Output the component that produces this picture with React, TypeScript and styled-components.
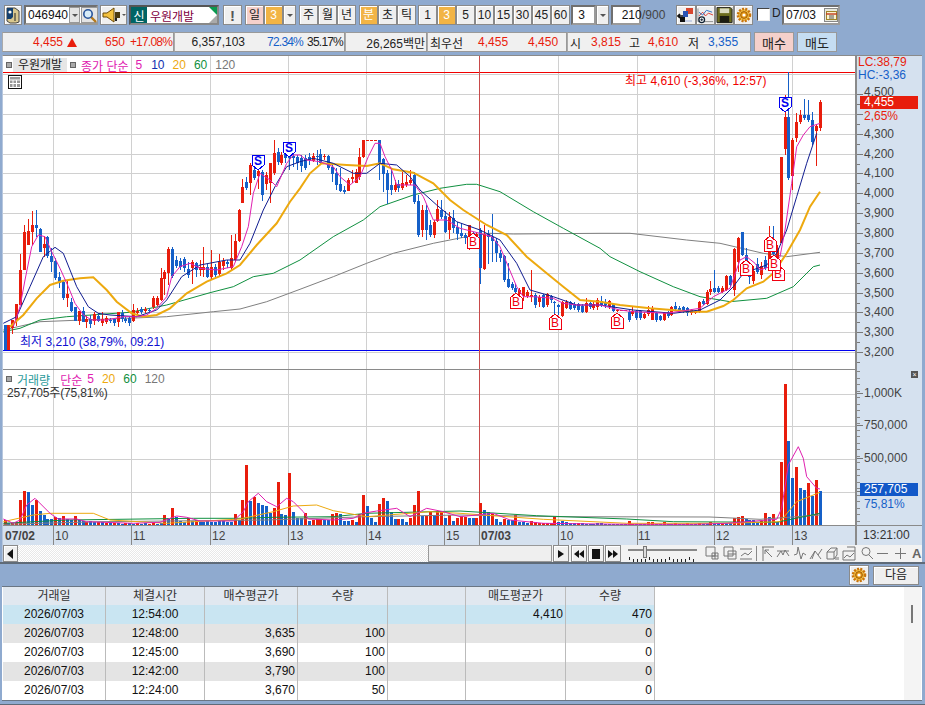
import React from "react";
import styled, { createGlobalStyle } from "styled-components";

const RED = "#E81D0C";
const BLUE = "#1560C8";
const FONT = `"Liberation Sans","Noto Sans CJK KR",sans-serif`;

const GlobalStyle = createGlobalStyle`
  html, body { margin: 0; padding: 0; background: #8FAACF; overflow: hidden; }
  #root { width: 925px; height: 705px; }
  * { box-sizing: border-box; }
`;

const Page = styled.div`
  width: 925px; height: 705px; display: flex; flex-direction: column;
  background: #8FAACF; font: 12px ${FONT}; color: #222; overflow: hidden;
`;
const Toolbar = styled.div`
  height: 32px; padding: 5px 0 0 4px; display: flex; align-items: flex-start; flex: none;
`;
const Btn = styled.div<{ $w: number; $ml?: number; $bg?: string; $c?: string; $fs?: number }>`
  width: ${(p) => p.$w}px; height: 20px; margin-left: ${(p) => p.$ml ?? 0}px; flex: none;
  display: flex; align-items: center; justify-content: center;
  background: ${(p) => p.$bg ?? "#EFEFEF"}; color: ${(p) => p.$c ?? "#222"};
  border: 1px solid #8a8a8a; box-shadow: inset 1px 1px 0 #fff;
  font-size: ${(p) => p.$fs ?? 12}px; line-height: 1;
`;
const Field = styled.div<{ $w: number; $ml?: number }>`
  width: ${(p) => p.$w}px; height: 20px; margin-left: ${(p) => p.$ml ?? 0}px; flex: none;
  display: flex; align-items: center; background: #fff; border: 2px solid #6f6f6f;
  border-right-color: #9a9a9a; border-bottom-color: #9a9a9a; font-size: 12px; color: #111; padding-left: 2px;
`;
const CodeBtn = styled.div<{ $w: number }>`
  width: ${(p) => p.$w}px; height: 16px; margin-left: 1px; flex: none; background: #E4E4E4;
  border: 1px solid #999; display: flex; align-items: center; justify-content: center;
`;
const Caret = styled.i`
  width: 0; height: 0; border-left: 3px solid transparent; border-right: 3px solid transparent;
  border-top: 3px solid #555;
`;
const NameBox = styled.div`
  position: relative; width: 90px; height: 20px; margin-left: 2px; flex: none; background: #fff;
  border: 2px solid #555; border-right-color: #888; border-bottom-color: #888;
  display: flex; align-items: center; color: #7F0040; font-size: 12px;
`;
const Shin = styled.span`
  width: 16px; height: 16px; background: #006464; color: #fff; font-size: 12px;
  display: flex; align-items: center; justify-content: center; margin-right: 3px;
`;
const CornerTop = styled.i`
  position: absolute; right: 0; top: 0; width: 0; height: 0;
  border-top: 8px solid #0A9A50; border-left: 8px solid transparent;
`;
const CornerBot = styled.i`
  position: absolute; right: 0; bottom: 0; width: 0; height: 0;
  border-bottom: 8px solid #aaa; border-left: 8px solid transparent;
`;
const Slash = styled.span`
  margin-left: 1px; width: 34px; flex: none; font-size: 12px; line-height: 20px; color: #444;
`;
const Check = styled.div`
  width: 13px; height: 13px; margin: 3px 0 0 4px; background: #fff;
  border: 1px solid #eee; border-top-color: #444; border-left-color: #444; flex: none;
`;
const DLabel = styled.span`
  margin-left: 2px; width: 9px; font-size: 12px; line-height: 17px; color: #222; flex: none;
`;
const DateIcon = styled.div`
  width: 17px; height: 14px; margin-left: 8px; background: #E8E8DC; border: 1px solid #888;
  display: flex; align-items: center; justify-content: center;
`;

const StatsRow = styled.div`
  height: 20px; margin-top: 0; padding-left: 2px; display: flex; flex: none;
`;
const StatCell = styled.div<{ $w: number }>`
  width: ${(p) => p.$w}px; height: 20px; background: #F0F0F0; border: 1px solid #999;
  border-left-color: #aaa; display: flex; align-items: center; font-size: 12px;
`;
const Val = styled.span<{ $w?: number; $c?: string; $ml?: number; $tight?: boolean }>`
  width: ${(p) => (p.$w ? `${p.$w}px` : "auto")}; margin-left: ${(p) => p.$ml ?? 0}px;
  text-align: right; color: ${(p) => p.$c ?? "#222"}; flex: none;
  white-space: nowrap; letter-spacing: ${(p) => (p.$tight ? "-0.8px" : "0")};
`;
const Tri = styled.i`
  margin-left: 4px; width: 0; height: 0; border-left: 5px solid transparent; border-right: 5px solid transparent;
  border-bottom: 9px solid ${RED};
`;
const Trade = styled.div<{ $bg: string; $ml: number }>`
  width: 40px; height: 20px; margin-left: ${(p) => p.$ml}px; background: ${(p) => p.$bg};
  border: 1px solid #999; display: flex; align-items: center; justify-content: center; font-size: 13px; color: #222;
`;

const Chart = styled.div`
  margin: 3px 3px 0 2px; width: 920px; flex: none; display: flex; flex-direction: column;
  background: #D5E1EF; border-top: 1px solid #8a8a8a; border-left: 1px solid #B7C7DE;
`;
const PaneRow = styled.div<{ $h: number }>`
  height: ${(p) => p.$h}px; display: flex; position: relative; flex: none;
`;
const Plot = styled.div<{ $ruled?: boolean }>`
  position: relative; width: 852px; height: 100%; background: #fff; flex: none;
  border-top: ${(p) => (p.$ruled ? "1px solid #8a8a8a" : "0")};
  svg { display: block; }
`;
const AxisCol = styled.div`
  position: relative; width: 67px; height: 100%; border-left: 2px solid #8a8a8a; flex: none;
  svg { display: block; }
`;
const Legend = styled.div`
  position: absolute; left: 3px; top: 2px; display: flex; align-items: center; height: 14px; font-size: 12px;
`;
const Sq = styled.i<{ $ml?: number }>`
  width: 6px; height: 6px; margin-left: ${(p) => p.$ml ?? 0}px; background: #aaa; border: 1px solid #666; flex: none;
`;
const NameTag = styled.span`
  margin-left: 1px; width: 54px; height: 14px; text-align: center; line-height: 14px; background: #E6E6E6; color: #222;
`;
const Lg = styled.span<{ $c: string; $ml: number }>`
  margin-left: ${(p) => p.$ml}px; color: ${(p) => p.$c}; white-space: nowrap;
`;
const GridIcon = styled.div`
  position: absolute; left: 5px; top: 19px; width: 14px; height: 14px; border: 1px solid #111; background: #fff;
  display: flex; align-items: center; justify-content: center;
`;
const SubLegend = styled.div`
  position: absolute; left: 4px; top: 13px; font-size: 12px; letter-spacing: -0.15px; color: #333; white-space: nowrap;
`;
const PriceTag = styled.div<{ $bg: string; $top: number }>`
  position: absolute; left: 3px; top: ${(p) => p.$top}px; width: 58px; height: 13px; padding-left: 4px;
  background: ${(p) => p.$bg}; color: #fff; font-size: 12px; line-height: 13px;
`;
const CloseMark = styled.div`
  position: absolute; right: 4px; top: 2px; width: 7px; height: 7px; background: #555; color: #fff;
  font-size: 7px; line-height: 7px; text-align: center;
`;
const XRow = styled.div`
  height: 20px; display: flex; flex: none; border-top: 1px solid #8a8a8a; background: #D5E1EF;
  svg { display: block; }
`;
const XTime = styled.div`
  width: 67px; height: 100%; border-left: 2px solid #8a8a8a; padding-left: 6px; line-height: 18px; font-size: 12px; color: #333;
`;
const ScrollRow = styled.div`
  height: 17px; display: flex; align-items: center; background: #F2F2F2; flex: none;
`;
const ScrollBtn = styled.div<{ $w: number; $ml?: number }>`
  width: ${(p) => p.$w}px; height: 17px; margin-left: ${(p) => p.$ml ?? 0}px; flex: none; background: #F0F0F0;
  border: 1px solid #8a8a8a; box-shadow: inset 1px 1px 0 #fff; display: flex; align-items: center; justify-content: center;
`;
const Track = styled.div`
  width: 410px; height: 17px; flex: none;
  background: repeating-conic-gradient(#fff 0 25%, #E8E8E8 0 50%) 0 0 / 2px 2px;
`;
const Thumb = styled.div`
  width: 124px; height: 17px; flex: none; background: #EFEFEF; border: 1px solid #999;
`;
const Tools = styled.div`
  display: flex; align-items: center; margin-left: 6px; height: 17px; color: #666;
  svg { display: block; flex: none; }
`;
const Sep = styled.i`
  width: 1px; height: 15px; margin: 0 4px 0 3px; background: #888; flex: none;
`;
const ToolSlot = styled.span<{ $ml: number }>`
  margin-left: ${(p) => p.$ml}px; display: flex; flex: none; font-size: 13px; font-weight: 700; color: #666;
`;
const BottomBar = styled.div`
  height: 24px; flex: none; display: flex; align-items: center; justify-content: flex-end;
  padding-right: 6px; margin-top: 0; border-top: 2px solid #5f6b78; background: #8FAACF;
`;
const NextBtn = styled(Btn)`
  margin-left: 4px; width: 46px; height: 19px;
`;
const Table = styled.div`
  margin-left: 2px; width: 920px; height: 115px; flex: none; position: relative; background: #fff;
  border-top: 1px solid #6a7684; border-bottom: 1px solid #6a7684; display: flex; flex-direction: column;
`;
const TRow = styled.div<{ $bg?: string; $h?: number; $c?: string }>`
  display: grid; height: ${(p) => p.$h ?? 19}px; flex: none; width: 652px; margin-left: 1px;
  grid-template-columns: 103px 99px 93px 90px 78px 100px 89px;
  background: ${(p) => p.$bg ?? "#fff"}; color: ${(p) => p.$c ?? "#111"};
`;
const TCell = styled.div<{ $r?: boolean }>`
  border-right: 1px solid #BBBBBB; line-height: 19px; font-size: 12px; white-space: nowrap;
  padding: 0 2px; text-align: ${(p) => (p.$r ? "right" : "center")};
`;
const VScroll = styled.div`
  position: absolute; right: 1px; top: 0; bottom: 0; width: 17px; background: #F4F4F4;
`;
const VThumb = styled.i`
  position: absolute; left: 7px; top: 18px; width: 2px; height: 18px; background: #777;
`;
const Tail = styled.div`
  flex: 1; border-bottom: 1px solid #5f6b78; margin-top: 0;
`;

/* ---------- chart data ---------- */
type C = [string, number, number, number, number];
const R = (t: number, b: number, h = t, l = b): C => ["r", t, b, h, l];
const B = (t: number, b: number, h = t, l = b): C => ["b", t, b, h, l];
const candles: C[] = [
  B(325,350),R(325,350),R(320,328,320,334),R(304,320,304,326),R(270,305,254,305),R(232,270,225,270),R(231,245,219,245),R(225,232,211,245),B(225,228,210,237),B(229,252,228,252),
  R(244,248,236,257),B(237,256,236,258),B(256,262,248,272),B(261,278,258,280),B(277,283,272,288),B(282,298,280,300),R(294,298,280,307),B(302,311,298,312),B(307,321),R(311,321,311,325),
  B(311,322,307,322),R(319,322,316,328),B(319,324,315,328),R(314,321,312,325),B(316,321,313,322),R(319,323,312,326),R(318,322,316,324),B(320,321,318,323),B(319,323,318,326),R(312,322,312,327),
  B(313,319,310,322),B(319,321,317,323),B(318,323,316,326),R(310,321,304,322),R(311,313,308,316),B(309,312,307,314),R(309,311,307,313),B(310,311,308,312),R(298,307,296,309),R(298,305,296,306),
  R(278,300,268,301),R(272,279,270,295),R(249,273,247,285),B(249,276,247,278),B(260,266,256,268),B(261,267,258,270),B(259,268,257,272),B(269,275,262,278),R(262,268,260,284),B(263,270,262,277),
  R(267,270,260,276),R(267,270,247,277),B(267,277,264,278),R(267,277,250,280),B(267,275,264,277),R(262,274,254,276),R(261,266,258,270),B(262,264,260,268),R(258,268,235,270),R(241,260,234,261),
  R(210,241,209,242),R(187,203,179,203),B(182,188,177,190),R(165,183,163,195),B(170,178,165,180),R(171,176,165,189),B(172,195,170,201),R(175,184,172,190),R(163,183,163,203),R(153,173,140,175),
  B(152,162,148,165),R(155,163,152,165),B(148,158,146,163),B(156,158,150,170),B(156,158,150,167),B(157,163,155,170),B(158,166,155,172),B(158,168,155,170),B(157,160,153,165),R(156,161,153,162),
  B(156,157,150,165),B(154,163,149,164),R(156,157,154,160),B(156,168,155,170),B(167,174,165,182),B(173,185,168,190),B(184,191,168,192),B(190,192,186,194),R(180,191,178,191),R(177,179,170,183),
  R(172,183,169,183),R(157,177,148,180),R(140,157,140,158),R(140,141),R(140,141),R(140,141),B(140,163,140,180),B(159,174,158,192),B(173,190,170,204),B(185,190,170,195),
  R(185,190,180,192),B(184,188,180,192),R(183,188,172,190),R(182,185,175,187),R(180,183,170,185),B(175,202,172,204),B(201,235,195,237),R(210,230,205,237),B(210,230,205,240),B(225,235,220,237),
  R(222,235,220,238),R(209,221,200,222),B(210,217,200,219),B(216,232,211,233),R(217,230,212,239),B(218,228,210,233),B(227,234,222,240),B(233,236,223,238),B(235,238,233,244),R(225,238,225,250),
  B(233,235,232,237),R(234,236,232,240),B(230,268,228,284),R(234,269,225,270),B(234,237,230,264),B(237,241,214,262),B(241,253,238,262),B(253,258,250,262),B(256,280,255,282),B(279,287,263,288),
  B(284,288,282,290),B(288,292,284,293),R(290,294,288,296),R(287,296,287,301),R(292,296,290,298),R(295,297,270,302),B(295,305,293,308),R(297,302,295,307),B(295,307,294,308),R(294,305,293,307),
  B(296,300,295,303),B(302,303,301,315),B(305,307,304,315),R(302,316,301,317),R(302,308,300,309),B(302,309,301,310),B(304,308,302,310),B(304,310,303,312),B(306,312,304,313),R(303,312,298,313),
  B(303,307,302,309),R(304,308,302,310),R(300,307,298,310),B(301,305,296,307),B(302,305,299,308),R(301,306,300,309),B(304,311,303,312),R(310,311,309,312),R(310,311),R(310,311),
  B(312,320,310,322),R(311,314,306,316),B(311,318,310,320),B(311,318,310,320),R(314,318,312,319),R(310,314,306,316),R(308,320,306,320),B(313,320,312,322),B(316,320,315,321),R(313,320,312,321),
  B(312,316,311,318),R(307,315,306,316),B(306,309,302,311),B(308,312,306,313),B(307,311,306,313),B(308,313,307,316),R(310,313,309,315),R(311,313,310,314),R(302,312,301,313),B(301,304,299,305),
  R(292,304,290,305),R(289,292,281,295),B(288,292,270,293),B(288,292,286,293),R(288,292,286,293),R(276,290,275,291),B(276,285,275,287),R(249,290,248,296),R(238,262,237,272),B(232,255,232,256),
  B(255,261,248,263),B(273,277,270,284),R(271,281,266,284),B(264,272,258,274),R(266,275,262,279),B(260,268,256,270),R(250,268,226,269),B(245,254,226,256),R(248,258,245,262),R(157,243),
  R(117,149,95,155),B(117,178,72,180),R(140,176,138,190),R(122,138,113,142),R(115,122,110,124),B(115,118,99,120),B(115,120,100,122),B(120,142,112,145),R(126,131,125,166),R(102,128,100,131),
];
const vols = [
  5,-2,2,3,25,34,-33,-20,25,-14,-10,-6,-6,8,-7,9,-6,-5,9,-5,-4,3,-4,-3,3,-3,2,-2,2,-2,-1,2,-2,-1,2,-1,-2,1,2,-1,-2,
  10,-7,17,-8,-4,-3,7,-4,5,-3,-3,-4,-3,-3,-4,-5,-3,-3,11,-5,25,60,-24,28,-22,-20,-19,-12,17,43,-11,-10,52,-13,-7,-7,
  12,-4,5,6,6,-5,-5,11,12,-11,-4,-4,5,-3,11,30,-19,-7,-3,21,27,-24,-13,-6,6,-6,-3,7,20,34,-9,9,13,-10,14,14,-7,10,-4,7,
  9,8,-7,-7,7,
  22,-15,-13,11,-6,-3,6,-5,-5,10,-3,-3,-2,4,3,2,2,2,2,8,-3,-4,-3,-2,-2,2,-2,-1,-1,-1,-2,-2,-1,-1,-1,-1,-1,-1,
  4,1,-1,-1,-1,3,3,-1,-1,3,-1,-1,2,-1,-1,2,-1,-1,2,-1,-1,3,-1,-1,2,-2,-2,7,8,9,-6,-5,-5,-3,4,12,-8,11,-3,63,141,-84,-47,58,-37,-35,42,-29,45,-34,
];
const xAt = (i: number) => Math.round(4.5 + 3.9 * i);

const pts = (ox: number, oy: number, a: number[]) => {
  const o: string[] = [];
  for (let i = 0; i < a.length; i += 2) o.push(`${(ox + a[i] / 3).toFixed(1)},${(oy + a[i + 1] / 3).toFixed(1)}`);
  return o.join(" ");
};
const join = (...s: string[]) => s.join(" ");

const ma5 = join(
  pts(0,130,[40,590,60,530,75,450,95,350,115,315,135,320,155,365,180,415,205,470,225,520,250,555,275,570,320,570,370,560,410,560,440,555,470,535,500,500,515,440,540,410,570,400,600,415,650,420,700,410,725,350,745,290,760,190,780,130,810,150,830,170,860,100,880,75,900,75]),
  pts(300,130,[20,90,60,95,100,110,120,140,150,165,180,140,205,80,225,40,240,40,255,80,275,120,290,165,320,165,345,165,370,200,400,270,440,270,480,295,540,310,575,320,600,350,625,410,650,470,670,500,700,500,760,505,790,520,830,525,900,525]),
  pts(600,70,[60,720,100,725,200,730,300,715,340,680,390,655,420,570,440,560,465,580,480,600,510,590,540,560,555,480,575,340,590,230,610,195,630,170,660,160]),
);
const ma10 = join(
  pts(0,130,[10,580,50,560,90,470,130,380,165,352,190,370,230,470,265,530,295,550,330,555,410,560,470,540,500,510,545,440,600,405,680,390,720,390,750,340,790,240,830,160,860,110,900,95]),
  pts(300,130,[40,85,100,100,160,130,200,130,240,100,290,105,330,140,360,180,410,225,470,275,540,300,600,330,650,400,690,480,760,500,830,525,900,525]),
  pts(600,70,[100,720,220,730,300,720,360,690,400,650,430,610,500,585,530,550,560,480,590,380,620,280,650,190]),
);
const ma20 = join(
  pts(0,130,[30,590,70,555,110,505,150,465,190,452,240,445,280,442,320,480,350,515,395,550,430,560,470,555,510,535,560,490,620,455,680,430,720,405,770,345,830,280,870,215,900,175]),
  pts(300,130,[30,130,65,100,140,105,200,108,240,100,280,118,340,128,400,160,450,210,490,240,560,285,620,315,680,380,740,430,790,470,840,510,900,515]),
  pts(600,70,[60,705,150,715,280,725,320,725,370,708,400,690,440,655,490,635,520,610,560,550,600,480,630,410,660,365]),
);
const ma60 = join(
  pts(0,130,[10,605,60,595,120,570,200,560,390,547,500,525,630,488,700,470,760,440,820,430,900,390]),
  pts(300,130,[100,320,190,270,240,230,340,195,420,175,500,163,530,163,600,185,700,245,790,295,900,355]),
  pts(600,70,[30,560,120,605,220,650,300,680,390,695,500,685,580,650,640,590,660,585]),
);
const ma120 = join(
  pts(0,130,[10,600,120,575,250,570,500,560,640,545,720,537,800,515,900,478]),
  pts(300,130,[100,440,200,400,280,370,400,340,500,320,570,310,640,312,900,310]),
  pts(600,70,[90,490,260,510,360,520,490,550,560,560,660,547]),
);
const v5 = join(
  pts(0,365,[10,462,40,475,60,465,80,420,105,400,125,420,150,445,175,462,230,462,260,470,400,475,480,472,510,460,530,453,560,457,600,468,700,468,730,440,745,410,775,385,800,410,830,425,860,400,880,410,910,440,925,462,1000,465,1060,460,1090,445,1130,438,1190,430,1230,455,1280,430,1330,440,1380,455]),
  pts(460,365,[50,450,100,445,150,465,250,475,500,478,700,478,800,475,950,463,965,430,985,300,1015,245,1030,280,1040,335,1070,370,1080,372]),
);
const v20 = join(
  pts(0,365,[10,470,100,450,150,445,280,445,330,465,500,475,720,462,820,440,880,423,950,420,1000,437,1100,455,1290,440,1380,445]),
  pts(460,365,[250,463,500,475,800,475,960,470,1010,410,1080,382]),
);
const v60 = join(
  pts(0,365,[10,475,200,465,580,460,720,460,820,457,1000,455,1100,445,1380,438]),
  pts(460,365,[230,452,500,462,640,470,950,472,1080,445]),
);
const v120 = join(
  pts(0,365,[10,478,300,470,800,465,1100,455,1380,450]),
  pts(460,365,[300,455,750,456,900,463,1080,450]),
);

const vGrid = [53, 131, 210, 288, 366, 444, 558, 637, 714, 792];
const priceLevels = Array.from({ length: 14 }, (_, k) => ({ p: 3200 + k * 100, y: Math.round(94 + (13 - k) * 19.85) }));
const volLevels = [394, 426, 459, 492];

const Mark = ({ kind, x, y }: { kind: "S" | "B"; x: number; y: number }) => {
  const c = kind === "S" ? "#0000F0" : "#F00010";
  const d = kind === "S" ? `M${x} ${y}h12v10l-6 5l-6 -5z` : `M${x} ${y + 15}h12v-10l-6 -5l-6 5z`;
  return (
    <g>
      <path d={d} fill="#fff" stroke={c} />
      <text x={x + 6} y={y + (kind === "S" ? 10 : 13)} textAnchor="middle" fontSize="12" fontWeight={kind === "S" ? 700 : 400} fontFamily={FONT} fill={c}>{kind}</text>
    </g>
  );
};

const PricePlot = () => (
  <svg width={852} height={313} viewBox="3 56 852 313" shapeRendering="crispEdges">
    {priceLevels.map((l) => <rect key={l.p} x={3} y={l.y} width={852} height={1} fill="#D0D0D0" />)}
    <rect x={3} y={74} width={852} height={1} fill="#D0D0D0" />
    {vGrid.map((x) => <rect key={x} x={x} y={56} width={1} height={313} fill="#D0D0D0" />)}
    <rect x={3} y={72} width={852} height={1} fill="#F00000" />
    <rect x={3} y={350} width={852} height={1} fill="#0000F0" />
    <rect x={479} y={56} width={1} height={313} fill="#C84A4A" />
    <g fill="none" shapeRendering="auto">
      <polyline points={ma120} stroke="#808080" strokeWidth="1" />
      <polyline points={ma60} stroke="#109040" strokeWidth="1" />
    </g>
    {candles.map(([k, t, b, h, l], i) => {
      const x = xAt(i);
      const c = k === "r" ? RED : BLUE;
      return (
        <g key={i} fill={c}>
          <rect x={x} y={h} width={1} height={Math.max(1, l - h)} />
          <rect x={x - 1} y={t} width={3} height={Math.max(1, b - t)} />
        </g>
      );
    })}
    <g fill="none" shapeRendering="auto">
      <polyline points={ma20} stroke="#EDA90F" strokeWidth="2" />
      <polyline points={ma10} stroke="#101C90" strokeWidth="1" />
      <polyline points={ma5} stroke="#E020B0" strokeWidth="1" />
    </g>
    <Mark kind="S" x={252} y={155} />
    <Mark kind="S" x={283} y={142} />
    <Mark kind="S" x={779} y={97} />
    <Mark kind="B" x={467} y={233} />
    <Mark kind="B" x={510} y={293} />
    <Mark kind="B" x={549} y={314} />
    <Mark kind="B" x={611} y={313} />
    <Mark kind="B" x={740} y={260} />
    <Mark kind="B" x={764} y={236} />
    <Mark kind="B" x={772} y={265} />
    <Mark kind="B" x={768} y={255} />
    <text x={625} y={85} fontSize="12" fontFamily={FONT} fill="#F00000">최고 4,610 (-3,36%, 12:57)</text>
    <text x={20} y={346} fontSize="12" fontFamily={FONT} fill="#1010D0">최저 3,210 (38,79%, 09:21)</text>
  </svg>
);

const VolPlot = () => (
  <svg width={852} height={155} viewBox="3 370 852 155" shapeRendering="crispEdges">
    {volLevels.map((y) => <rect key={y} x={3} y={y} width={852} height={1} fill="#D0D0D0" />)}
    {vGrid.map((x) => <rect key={x} x={x} y={370} width={1} height={155} fill="#D0D0D0" />)}
    <rect x={479} y={370} width={1} height={155} fill="#C84A4A" />
    {vols.map((v, i) => (
      <rect key={i} x={xAt(i) - 1} y={525 - Math.abs(v)} width={3} height={Math.abs(v)} fill={v > 0 ? RED : BLUE} />
    ))}
    <g fill="none" strokeWidth="1" shapeRendering="auto">
      <polyline points={v120} stroke="#808080" />
      <polyline points={v60} stroke="#109040" />
      <polyline points={v20} stroke="#EDA90F" />
      <polyline points={v5} stroke="#E020B0" />
    </g>
  </svg>
);

const PriceAxis = () => (
  <svg width={65} height={313} viewBox="857 56 65 313" shapeRendering="crispEdges" fontFamily={FONT}>
    <text x={858} y={66} fontSize="12" fill={RED}>LC:38,79</text>
    <text x={858} y={79} fontSize="12" fill={BLUE}>HC:-3,36</text>
    {priceLevels.map((l) => (
      <g key={l.p}>
        <rect x={857} y={l.y} width={6} height={1} fill="#777" />
        <rect x={857} y={l.y + 10} width={3} height={1} fill="#777" />
        {l.p !== 4400 && <text x={864} y={l.y + (l.p === 4500 ? 2 : 4)} fontSize="12" fill="#444">{l.p.toLocaleString("en-US")}</text>}
      </g>
    ))}
    <text x={864} y={120} fontSize="12" fill={RED}>2,65%</text>
  </svg>
);

const VolAxis = () => (
  <svg width={65} height={155} viewBox="857 370 65 155" shapeRendering="crispEdges" fontFamily={FONT}>
    {Array.from({ length: 25 }, (_, k) => 372 + k * 6.5).map((y) => (
      <rect key={y} x={857} y={Math.round(y)} width={3} height={1} fill="#888" />
    ))}
    {volLevels.map((y) => <rect key={y} x={857} y={y} width={6} height={1} fill="#777" />)}
    <text x={864} y={398} fontSize="12" fill="#444">1,000K</text>
    <text x={864} y={430} fontSize="12" fill="#444">750,000</text>
    <text x={864} y={463} fontSize="12" fill="#444">500,000</text>
    <text x={864} y={509} fontSize="12" fill={BLUE}>75,81%</text>
  </svg>
);

const xLabels: [number, string, boolean][] = [
  [5, "07/02", true], [55, "10", false], [133, "11", false], [212, "12", false], [290, "13", false],
  [368, "14", false], [446, "15", false], [481, "07/03", true], [560, "10", false], [638, "11", false], [716, "12", false], [794, "13", false],
];
const XAxis = () => (
  <svg width={852} height={19} viewBox="3 527 852 19" shapeRendering="crispEdges" fontFamily={FONT}>
    {[53, 131, 210, 288, 366, 444, 479, 558, 637, 714, 792].map((x) => <rect key={x} x={x} y={527} width={1} height={19} fill="#888" />)}
    {xLabels.map(([x, t, bold]) => (
      <text key={x} x={x} y={541} fontSize="12" fontWeight={bold ? 700 : 400} fill="#444">{t}</text>
    ))}
  </svg>
);

/* ---------- small icons ---------- */
const Gear = ({ s = 16 }: { s?: number }) => (
  <svg width={s} height={s} viewBox="0 0 16 16">
    <circle cx="8" cy="8" r="6" fill="#F3C246" stroke="#C9740C" strokeWidth="2.6" strokeDasharray="2 1.2" />
    <circle cx="8" cy="8" r="3.4" fill="#E99A12" stroke="#8A4A08" strokeWidth="0.8" />
    <circle cx="8" cy="8" r="1.6" fill="#fff" />
  </svg>
);
const Logo = () => (
  <svg width="16" height="17" viewBox="0 0 16 17">
    <path d="M2 1h8l4 3v11l-3 1H5l-3-2z" fill="#D9C88F" stroke="#444" />
    <path d="M2 1h6v9l-2 2H2z" fill="#14406E" />
    <circle cx="5" cy="5" r="1.6" fill="#fff" />
    <path d="M10 6v8" stroke="#222" />
  </svg>
);
const Lens = () => (
  <svg width="15" height="15" viewBox="0 0 15 15">
    <path d="M9 9l5 5" stroke="#B5791B" strokeWidth="2.4" />
    <circle cx="6" cy="6" r="4.2" fill="#D8ECF8" stroke="#27539A" strokeWidth="1.6" />
  </svg>
);
const Horn = () => (
  <svg width="24" height="16" viewBox="0 0 24 16">
    <path d="M1 6h4l7-5v14l-7-5H1z" fill="#F3C13E" stroke="#6B4A08" />
    <rect x="13" y="5" width="5" height="6" fill="#4B3A10" />
    <path d="M14 11v3" stroke="#222" strokeWidth="2" />
    <path d="M20 7l2 2 2-2z" fill="#555" />
  </svg>
);
const CandleIcon = () => (
  <svg width="18" height="17" viewBox="0 0 18 17">
    <rect x="9" y="1" width="7" height="6" fill="#D8462E" />
    <rect x="6" y="4" width="5" height="6" fill="#2B55B5" />
    <path d="M1 9l5 0M3 7l-2 2 2 2" stroke="#111" strokeWidth="1.6" fill="none" />
    <rect x="3" y="10" width="5" height="5" fill="#111" />
    <path d="M8 14h7" stroke="#B8C4E0" strokeWidth="1.5" />
  </svg>
);
const TrendIcon = () => (
  <svg width="18" height="17" viewBox="0 0 18 17">
    <path d="M1 1v14h16" stroke="#888" fill="none" />
    <path d="M2 9l4-4 3 4 3-3 5 2" stroke="#D8362E" fill="none" />
    <path d="M2 5l4 3 4-5 6 2" stroke="#2A6EC0" fill="none" />
    <circle cx="5" cy="13" r="3" fill="#fff" stroke="#123" strokeWidth="1.4" />
    <path d="M5 11.5v3M3.5 13h3" stroke="#123" />
  </svg>
);
const Floppy = () => (
  <svg width="18" height="18" viewBox="0 0 18 18">
    <path d="M1 1h14l2 2v14H1z" fill="#6C6C1E" stroke="#222" />
    <rect x="4" y="2" width="10" height="5" fill="#DADAC0" />
    <rect x="4" y="10" width="10" height="7" fill="#1C1C10" />
  </svg>
);
const CalIcon = () => (
  <svg width="11" height="9" viewBox="0 0 11 9">
    <rect x="0.5" y="0.5" width="10" height="8" fill="#FBF3D0" stroke="#A08428" />
    <path d="M0 3h11" stroke="#C03A1C" strokeWidth="1.4" />
    <path d="M3 5h5M3 7h5" stroke="#555" />
  </svg>
);
const GridGlyph = () => (
  <svg width="10" height="10" viewBox="0 0 10 10">
    <rect width="10" height="10" fill="#999" />
    <path d="M0 3h10M3 3v7M6.5 3v7M0 6.5h10" stroke="#fff" />
  </svg>
);
const T = ({ d, w = 14 }: { d: string; w?: number }) => (
  <svg width={w} height="15" viewBox={`0 0 ${w} 15`}><path d={d} fill="none" stroke="#777" strokeWidth="1" /></svg>
);
const Play = ({ d }: { d: string }) => (
  <svg width="12" height="10" viewBox="0 0 12 10"><path d={d} fill="#111" /></svg>
);
const Slider = () => (
  <svg width="72" height="17" viewBox="0 0 72 17" shapeRendering="crispEdges">
    <rect x="1" y="4" width="69" height="2" fill="#888" />
    {Array.from({ length: 17 }, (_, k) => <rect key={k} x={2 + k * 4} y={k % 5 === 0 ? 12 : 14} width="1" height="3" fill="#222" />)}
    <path d="M16 1h3v11h-3z" fill="#ddd" stroke="#777" />
  </svg>
);

const rows = [
  { d: "2026/07/03", t: "12:54:00", bp: "", bq: "", sp: "4,410", sq: "470", bg: "#C9E5F2" },
  { d: "2026/07/03", t: "12:48:00", bp: "3,635", bq: "100", sp: "", sq: "0", bg: "#E4E4E4" },
  { d: "2026/07/03", t: "12:45:00", bp: "3,690", bq: "100", sp: "", sq: "0", bg: "#fff" },
  { d: "2026/07/03", t: "12:42:00", bp: "3,790", bq: "100", sp: "", sq: "0", bg: "#E4E4E4" },
  { d: "2026/07/03", t: "12:24:00", bp: "3,670", bq: "50", sp: "", sq: "0", bg: "#fff" },
];
const periods: [string, string | undefined][] = [
  ["1", undefined], ["3", "#F2B445"], ["5", undefined], ["10", undefined], ["15", undefined], ["30", undefined], ["45", undefined], ["60", undefined],
];

export default function App() {
  return (
    <Page>
      <GlobalStyle />
      <Toolbar>
        <Btn $w={18}><Logo /></Btn>
        <Field $w={74} $ml={2}>
          046940
          <CodeBtn $w={11}><Caret /></CodeBtn>
          <CodeBtn $w={17}><Lens /></CodeBtn>
        </Field>
        <Btn $w={27} $ml={2}><Horn /></Btn>
        <NameBox>
          <Shin>신</Shin>우원개발
          <CornerTop /><CornerBot />
        </NameBox>
        <Btn $w={19} $ml={4} $fs={15} $c="#555"><b>!</b></Btn>
        <Btn $w={19} $ml={3} $bg="#F5D0CB">일</Btn>
        <Btn $w={19} $bg="#F2B445" $c="#fff">3</Btn>
        <Btn $w={13}><Caret /></Btn>
        <Btn $w={19} $ml={3}>주</Btn>
        <Btn $w={19}>월</Btn>
        <Btn $w={19}>년</Btn>
        <Btn $w={19} $ml={3} $bg="#F2B445" $c="#fff">분</Btn>
        <Btn $w={19}>초</Btn>
        <Btn $w={19}>틱</Btn>
        {periods.map(([t, bg], i) => (
          <Btn key={t} $w={19} $ml={i === 0 ? 2 : 0} $bg={bg} $c={bg ? "#fff" : "#222"} $fs={12}>{t}</Btn>
        ))}
        <Field $w={25} $ml={1}>&nbsp;3</Field>
        <Btn $w={13}><Caret /></Btn>
        <Field $w={30} $ml={2}>&nbsp;&nbsp;210</Field>
        <Slash>/900</Slash>
        <Btn $w={20}><CandleIcon /></Btn>
        <Btn $w={19}><TrendIcon /></Btn>
        <Btn $w={19} $bg="#D8D8C8"><Floppy /></Btn>
        <Btn $w={19}><Gear /></Btn>
        <Check />
        <DLabel>D</DLabel>
        <Field $w={58} $ml={1}>07/03<DateIcon><CalIcon /></DateIcon></Field>
      </Toolbar>

      <StatsRow>
        <StatCell $w={172}>
          <Val $w={60} $c={RED}>4,455</Val><Tri />
          <Val $w={48} $c={RED}>650</Val>
          <Val $w={47} $c={RED} $tight>+17.08%</Val>
        </StatCell>
        <StatCell $w={171}>
          <Val $w={70}>6,357,103</Val>
          <Val $w={58} $c={BLUE} $tight>72.34%</Val>
          <Val $w={40} $tight>35.17%</Val>
        </StatCell>
        <StatCell $w={82}><Val $w={79}>26,265백만</Val></StatCell>
        <StatCell $w={140}>
          <Val $ml={2}>최우선</Val>
          <Val $w={45} $c={RED}>4,455</Val>
          <Val $w={50} $c={RED}>4,450</Val>
        </StatCell>
        <StatCell $w={184}>
          <Val $ml={2}>시</Val>
          <Val $w={40} $c={RED}>3,815</Val>
          <Val $ml={8}>고</Val>
          <Val $w={38} $c={RED}>4,610</Val>
          <Val $ml={10}>저</Val>
          <Val $w={39} $c={BLUE}>3,355</Val>
        </StatCell>
        <Trade $bg="#F5D0CB" $ml={3}>매수</Trade>
        <Trade $bg="#C5DDF2" $ml={3}>매도</Trade>
      </StatsRow>

      <Chart>
        <PaneRow $h={313}>
          <Plot>
            <PricePlot />
            <Legend>
              <Sq /><NameTag>우원개발</NameTag><Sq $ml={3} />
              <Lg $c="#E020B0" $ml={5}>종가 단순</Lg>
              <Lg $c="#E020B0" $ml={7}>5</Lg>
              <Lg $c="#1030B0" $ml={9}>10</Lg>
              <Lg $c="#EDA90F" $ml={8}>20</Lg>
              <Lg $c="#109040" $ml={8}>60</Lg>
              <Lg $c="#777" $ml={8}>120</Lg>
            </Legend>
            <GridIcon><GridGlyph /></GridIcon>
          </Plot>
          <AxisCol>
            <PriceAxis />
            <PriceTag $bg={RED} $top={40}>4,455</PriceTag>
          </AxisCol>
        </PaneRow>
        <PaneRow $h={156}>
          <Plot $ruled>
            <VolPlot />
            <Legend>
              <Sq />
              <Lg $c="#2A9A9A" $ml={5}>거래량</Lg>
              <Lg $c="#E020B0" $ml={10}>단순</Lg>
              <Lg $c="#E020B0" $ml={5}>5</Lg>
              <Lg $c="#EDA90F" $ml={8}>20</Lg>
              <Lg $c="#109040" $ml={8}>60</Lg>
              <Lg $c="#777" $ml={8}>120</Lg>
            </Legend>
            <SubLegend>257,705주(75,81%)</SubLegend>
          </Plot>
          <AxisCol>
            <VolAxis />
            <PriceTag $bg="#1258C8" $top={114}>257,705</PriceTag>
            <CloseMark>×</CloseMark>
          </AxisCol>
        </PaneRow>
        <XRow>
          <XAxis />
          <XTime>13:21:00</XTime>
        </XRow>
        <ScrollRow>
          <ScrollBtn $w={15}><Play d="M8 0v10L2 5z" /></ScrollBtn>
          <Track />
          <Thumb />
          <ScrollBtn $w={16} $ml={1}><Play d="M3 1v8l6-4z" /></ScrollBtn>
          <ScrollBtn $w={16} $ml={2}><Play d="M6 1v8L1 5zM11 1v8L6 5z" /></ScrollBtn>
          <ScrollBtn $w={16} $ml={1}><Play d="M2 0h8v10H2z" /></ScrollBtn>
          <ScrollBtn $w={16} $ml={1}><Play d="M1 1v8l5-4zM6 1v8l5-4z" /></ScrollBtn>
          <Tools>
            <Slider />
            <ToolSlot $ml={6}><T d="M1 1h9v9H1zM7 7h6v6H7zM10 7v6M7 10h6" /></ToolSlot>
            <ToolSlot $ml={4}><T d="M1 1h9v9H1zM5 5h8v8H5zM5 8h8" /></ToolSlot>
            <ToolSlot $ml={2}><T d="M1 3h12M1 13h12M2 10l4-3 3 2 4-4" /></ToolSlot>
            <Sep />
            <ToolSlot $ml={0}><T d="M1 1h12M2 1v14M4 4l7 7M4 4h4M4 4v4" /></ToolSlot>
            <ToolSlot $ml={1}><T d="M1 5h12M1 11l4-6 2 4 2-5 4 6" /></ToolSlot>
            <ToolSlot $ml={3}><T d="M1 9l3-1 1-7 3 12 2-6 3 2" /></ToolSlot>
            <ToolSlot $ml={2}><T d="M1 13l5-8 3 4 4-6M6 5l-3 8M9 9l3 4" /></ToolSlot>
            <ToolSlot $ml={3}><T d="M1 6l4-4h6v7l-3 4H1zM1 6h7v7M8 6l3-4M10 11v3M12 11v3" /></ToolSlot>
            <ToolSlot $ml={2}><T d="M1 5h12v9H1zM5 1h8v4M2 12l3-3 3 2 4-4" /></ToolSlot>
            <ToolSlot $ml={4}><T d="M6 1.5a4 4 0 1 1 0 8a4 4 0 0 1 0-8zM9 9l4 4" /></ToolSlot>
            <ToolSlot $ml={3}><T w={11} d="M0 7.5h11" /></ToolSlot>
            <ToolSlot $ml={7}><T w={11} d="M0 7.5h11M5.5 2v11" /></ToolSlot>
            <ToolSlot $ml={6}>A</ToolSlot>
          </Tools>
        </ScrollRow>
      </Chart>

      <BottomBar>
        <Btn $w={20}><Gear /></Btn>
        <NextBtn $w={46}>다음</NextBtn>
      </BottomBar>
      <Table>
        <TRow $bg="#E1E8F0" $c="#333" $h={18}>
          {["거래일", "체결시간", "매수평균가", "수량", "", "매도평균가", "수량"].map((h, i) => <TCell key={i}>{h}</TCell>)}
        </TRow>
        {rows.map((r) => (
          <TRow key={r.t} $bg={r.bg}>
            <TCell>{r.d}</TCell>
            <TCell>{r.t}</TCell>
            <TCell $r>{r.bp}</TCell>
            <TCell $r>{r.bq}</TCell>
            <TCell />
            <TCell $r>{r.sp}</TCell>
            <TCell $r>{r.sq}</TCell>
          </TRow>
        ))}
        <VScroll><VThumb /></VScroll>
      </Table>
      <Tail />
    </Page>
  );
}
